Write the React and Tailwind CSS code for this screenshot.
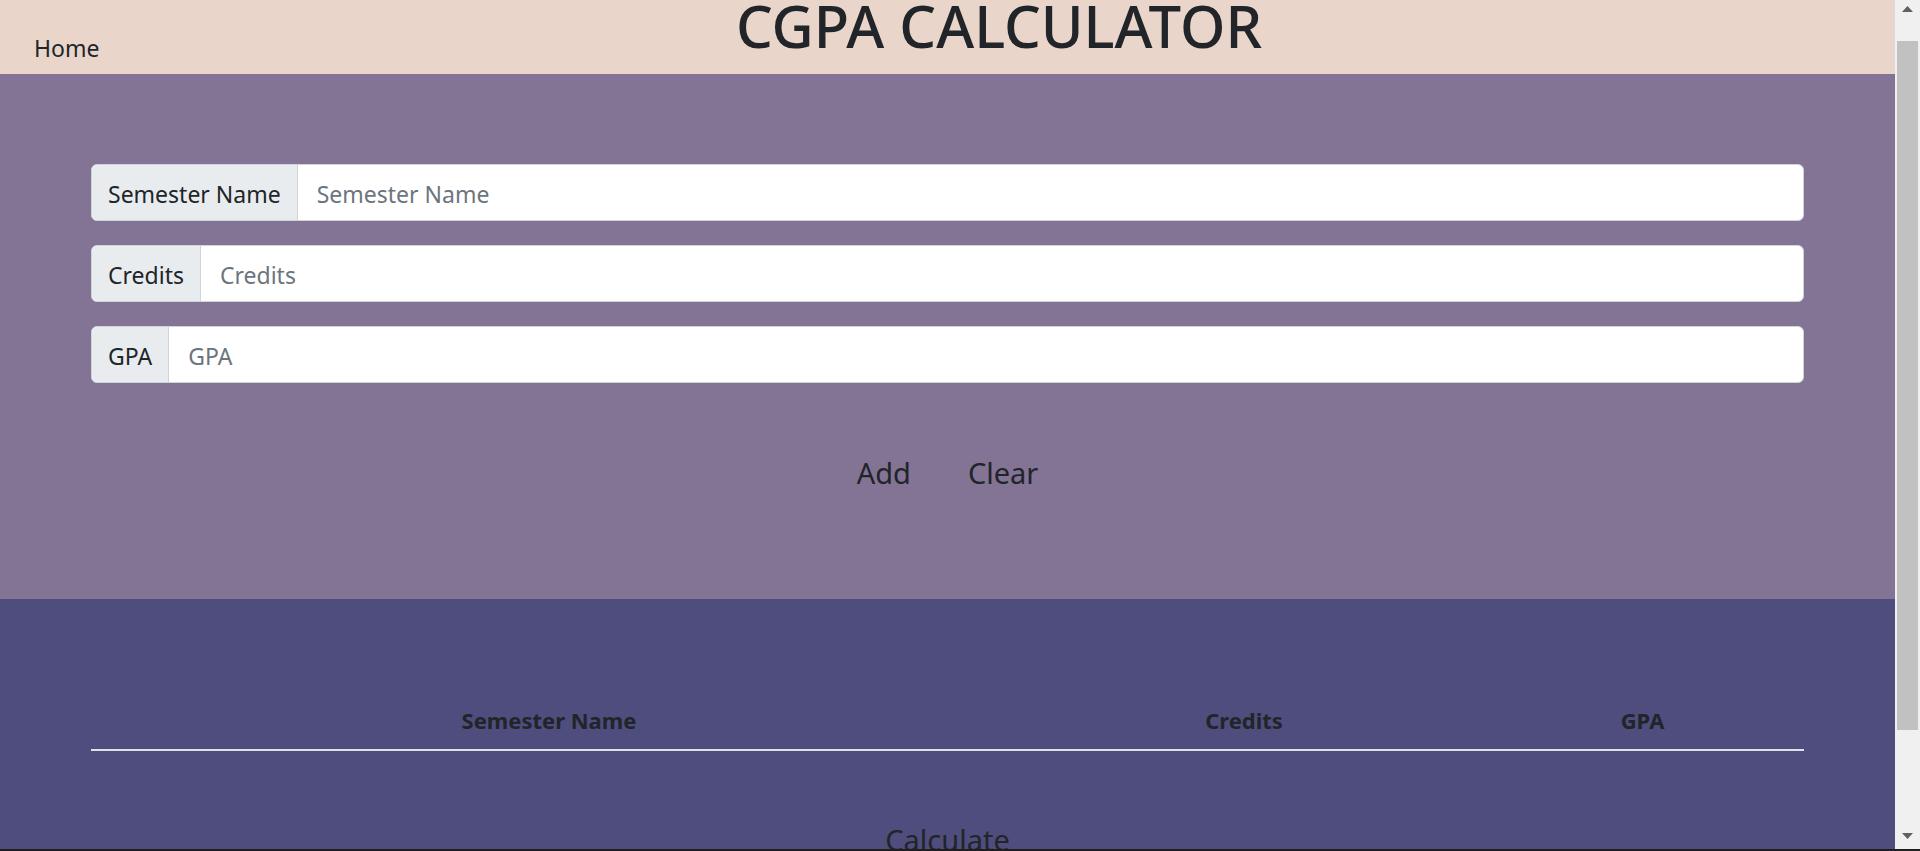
import React, { useLayoutEffect, useRef } from 'react';

const FIELDS = ['Semester Name', 'Credits', 'GPA'];

function InputRow({ label }) {
  return (
    <div className="flex h-[57px] rounded-[6px] border border-[#ced4da] bg-white">
      <span className="flex items-center rounded-l-[6px] border-r border-[#ced4da] bg-[#e9ecef] px-[16px] pt-[3px] text-[23px] leading-[36px] text-[#212529]">
        {label}
      </span>
      <input
        type="text"
        placeholder={label}
        className="min-w-0 flex-1 rounded-r-[6px] bg-transparent px-[19px] pt-[3px] text-[23px] leading-[36px] text-[#495057] outline-none placeholder:text-[#6c757d]"
      />
    </div>
  );
}

function Arrow({ down }) {
  return (
    <svg width="11" height="6" viewBox="0 0 11 6" className="mx-auto block">
      <path d={down ? 'M0 0 L11 0 L5.5 6Z' : 'M0 6 L5.5 0 L11 6Z'} fill="#606060" />
    </svg>
  );
}

// window scrollbar as it shows in the screenshot
function Scrollbar() {
  return (
    <aside className="flex w-[25px] shrink-0 flex-col bg-[#f0f0f0]">
      <div className="h-[25px] pt-[6px]">
        <Arrow />
      </div>
      <div className="flex-1 pt-[16px]">
        <div className="mx-[2px] h-[689px] bg-[#c1c1c1]" />
      </div>
      <div className="h-[25px] pt-[9px]">
        <Arrow down />
      </div>
    </aside>
  );
}

export default function App() {
  const scrollRef = useRef(null);

  // the page was photographed scrolled down a little
  useLayoutEffect(() => {
    if (scrollRef.current) scrollRef.current.scrollTop = 20;
  }, []);

  return (
    <div className="flex h-[851px] border-b-2 border-[#1e1e1e] font-['Noto_Sans',sans-serif] text-[#212529]">
      <div ref={scrollRef} className="min-w-0 flex-1 overflow-y-scroll [scrollbar-width:none]">
        <header className="flex h-[94px] bg-[#e9d5ca]">
          <a href="#" className="w-[103px] shrink-0 pl-[34px] pt-[50px] text-[23px] leading-[36px] text-[#212529]">
            Home
          </a>
          <h1 className="flex-1 pt-[12px] text-center text-[58px] font-medium leading-[67px]">CGPA CALCULATOR</h1>
        </header>

        <section className="h-[525px] bg-[#837395] px-[91px] pt-[90px]">
          <div className="flex flex-col gap-[24px]">
            {FIELDS.map((f) => (
              <InputRow key={f} label={f} />
            ))}
          </div>
          <div className="mt-[54px] flex justify-center gap-[9px]">
            <button type="button" className="px-[24px] py-[13px] text-[29px] leading-[45px] text-[#212529]">Add</button>
            <button type="button" className="px-[24px] py-[13px] text-[29px] leading-[45px] text-[#212529]">Clear</button>
          </div>
        </section>

        <section className="bg-[#4e4d7d] px-[91px] pt-[85px] pb-[94px]">
          <table className="w-full table-fixed border-collapse">
            <colgroup>
              <col className="w-[916px]" />
              <col className="w-[474px]" />
              <col />
            </colgroup>
            <thead>
              <tr className="border-b-2 border-[#dee2e6]">
                <th className="pt-[18px] pb-[11px] text-center text-[22px] font-bold leading-[36px] text-[#212529]">Semester Name</th>
                <th className="pt-[18px] pb-[11px] text-center text-[22px] font-bold leading-[36px] text-[#212529]">Credits</th>
                <th className="pt-[18px] pb-[11px] text-center text-[22px] font-bold leading-[36px] text-[#212529]">GPA</th>
              </tr>
            </thead>
            <tbody />
          </table>
          <div className="mt-[53px] flex justify-center">
            <button type="button" className="px-[24px] py-[13px] text-[29px] leading-[45px] text-[#212529]">Calculate</button>
          </div>
        </section>
      </div>
      <Scrollbar />
    </div>
  );
}
